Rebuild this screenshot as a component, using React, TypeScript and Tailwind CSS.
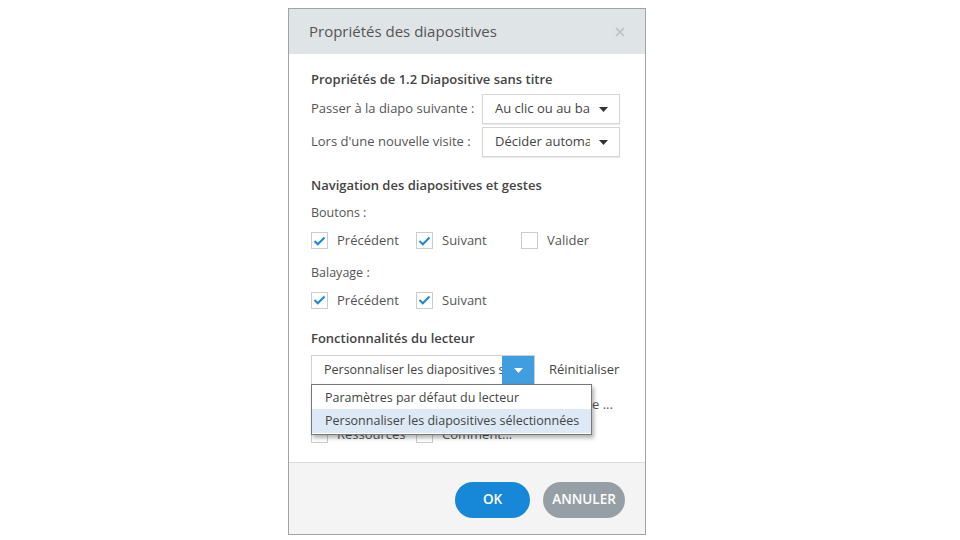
import React from "react";

const font = { fontFamily: '"Open Sans", "Noto Sans", sans-serif' };

function Caret({ className = "" }: { className?: string }) {
  return (
    <svg width="9" height="5" viewBox="0 0 9 5" className={className}>
      <path d="M0 0h9L4.5 5z" fill="currentColor" />
    </svg>
  );
}

function Check({ checked, label }: { checked?: boolean; label: string }) {
  return (
    <div className="flex items-center gap-[9px] w-[105px] shrink-0">
      <span className="w-[17px] h-[17px] border border-[#c9cdd1] bg-white flex items-center justify-center shrink-0">
        {checked && (
          <svg width="13" height="10" viewBox="0 0 13 10">
            <path d="M1.5 5l3.3 3.3L11.5 1.5" stroke="#1a88d8" strokeWidth="2" fill="none" />
          </svg>
        )}
      </span>
      <span className="text-[13px] text-[#555] whitespace-nowrap overflow-hidden">{label}</span>
    </div>
  );
}

function Select({ value }: { value: string }) {
  return (
    <div className="w-[138px] h-[30px] border border-[#d6d6d6] shadow-[0_1px_1px_rgba(0,0,0,0.08)] bg-white flex items-center pl-[12px] pr-[11px]">
      <span className="w-[95px] overflow-hidden whitespace-nowrap text-[13px] text-[#444]">{value}</span>
      <Caret className="text-[#333] ml-auto" />
    </div>
  );
}

export default function App() {
  return (
    <div className="w-[960px] h-[540px] bg-white relative" style={font}>
      <div className="absolute left-[288px] top-[8px] w-[358px] h-[527px] border border-[#a3a3a3] flex flex-col bg-white">
        <div className="h-[45px] bg-[#dfe4e7] flex items-center justify-between pl-[20px] pr-[20px] shrink-0">
          <span className="text-[15px] text-[#555]">Propriétés des diapositives</span>
          <svg width="10" height="10" viewBox="0 0 10 10">
            <path d="M1 1l8 8M9 1l-8 8" stroke="#c3c6c9" strokeWidth="1.8" />
          </svg>
        </div>

        <div className="flex-1 relative pl-[22px] pr-[25px] pt-[15px]">
          <div className="text-[13px] font-semibold text-[#444] leading-[20px]">
            Propriétés de 1.2 Diapositive sans titre
          </div>
          <div className="mt-[5px] flex items-center justify-between">
            <span className="text-[13px] text-[#555]">Passer à la diapo suivante :</span>
            <Select value="Au clic ou au bas de la diapositive" />
          </div>
          <div className="mt-[3px] flex items-center justify-between">
            <span className="text-[13px] text-[#555]">Lors d'une nouvelle visite :</span>
            <Select value="Décider automatiquement" />
          </div>

          <div className="mt-[18px] text-[13px] font-semibold text-[#444] leading-[20px]">
            Navigation des diapositives et gestes
          </div>
          <div className="mt-[9px] text-[12.5px] text-[#555] leading-[18px]">Boutons :</div>
          <div className="mt-[9px] flex">
            <Check checked label="Précédent" />
            <Check checked label="Suivant" />
            <Check label="Valider" />
          </div>
          <div className="mt-[13px] text-[12.5px] text-[#555] leading-[18px]">Balayage :</div>
          <div className="mt-[9px] flex">
            <Check checked label="Précédent" />
            <Check checked label="Suivant" />
          </div>

          <div className="mt-[18px] text-[13px] font-semibold text-[#444] leading-[20px]">
            Fonctionnalités du lecteur
          </div>
          <div className="mt-[7px] flex items-center">
            <div className="w-[224px] h-[30px] border border-[#d0d0d0] bg-white flex">
              <span className="flex-1 overflow-hidden whitespace-nowrap text-[12.5px] text-[#444] pl-[12px] leading-[28px]">
                Personnaliser les diapositives sélectionnées
              </span>
              <span className="w-[32px] h-full bg-[#3f9de0] flex items-center justify-center">
                <Caret className="text-white" />
              </span>
            </div>
            <span className="ml-[14px] text-[13px] text-[#444]">Réinitialiser</span>
          </div>
          <div className="mt-[10px] flex">
            <Check checked label="Titre" />
            <Check checked label="Volume" />
            <div className="flex items-center gap-[9px] shrink-0">
              <span className="w-[17px] h-[17px] border border-[#c9cdd1] bg-white shrink-0" />
              <span className="text-[13px] text-[#555] whitespace-nowrap">Contrôle ...</span>
            </div>
          </div>
          <div className="mt-[10px] flex">
            <Check label="Ressources" />
            <Check label="Comment..." />
          </div>

          <div className="absolute left-[22px] top-[330px] w-[281px] border border-[#777] bg-white shadow-[2px_3px_4px_rgba(0,0,0,0.3)] py-[1px]">
            <div className="h-[23px] leading-[23px] pl-[13px] text-[12.5px] text-[#444] whitespace-nowrap">
              Paramètres par défaut du lecteur
            </div>
            <div className="h-[24px] leading-[24px] pl-[13px] text-[12.5px] text-[#444] bg-[#dde9f5] whitespace-nowrap">
              Personnaliser les diapositives sélectionnées
            </div>
          </div>
        </div>

        <div className="h-[72px] shrink-0 bg-[#f4f4f4] border-t border-[#dcdcdc] flex items-center justify-end gap-[13px] pr-[20px] pt-[2px]">
          <button className="w-[75px] h-[36px] rounded-full bg-[#1788d8] text-white text-[13.5px] font-semibold">
            OK
          </button>
          <button className="w-[82px] h-[36px] rounded-full bg-[#969fa6] text-white text-[13.5px] font-semibold">
            ANNULER
          </button>
        </div>
      </div>
    </div>
  );
}
